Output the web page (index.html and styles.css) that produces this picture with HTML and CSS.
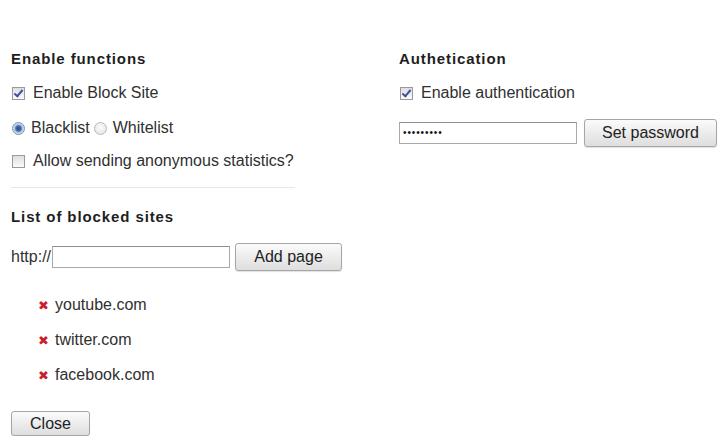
FILE: index.html
```html
<!DOCTYPE html>
<html>
<head>
<meta charset="utf-8">
<link rel="stylesheet" href="styles.css">
</head>
<body>
<div class="page">
  <div class="col left">
    <h2 class="heading">Enable functions</h2>
    <div class="row r1"><span class="cb checked"></span><span>Enable Block Site</span></div>
    <div class="row r2"><span class="radio on"></span><span>Blacklist</span><span class="radio gap"></span><span>Whitelist</span></div>
    <div class="row r3"><span class="cb"></span><span>Allow sending anonymous statistics?</span></div>
    <div class="sep"></div>
    <h2 class="heading h2b">List of blocked sites</h2>
    <div class="addrow"><span>http://</span><span class="field url"></span><span class="btn add">Add page</span></div>
    <ul class="sites">
      <li><span class="x">✖</span>youtube.com</li>
      <li><span class="x">✖</span>twitter.com</li>
      <li><span class="x">✖</span>facebook.com</li>
    </ul>
    <span class="btn close">Close</span>
  </div>
  <div class="col right">
    <h2 class="heading">Authetication</h2>
    <div class="row r1"><span class="cb checked"></span><span>Enable authentication</span></div>
    <div class="pwrow"><span class="field pw">•••••••••</span><span class="btn setpw">Set password</span></div>
  </div>
</div>
</body>
</html>
```
FILE: styles.css
```css
html, body { margin: 0; padding: 0; background: #fff; }
body { font-family: "Liberation Sans", Arial, sans-serif; color: #303030; font-size: 16px; }
.page { display: grid; grid-template-columns: 388px 1fr; padding: 48px 0 0 11px; }
.col { display: flex; flex-direction: column; align-items: flex-start; }
.heading { margin: 0; font-size: 15px; font-weight: bold; color: #1e1e1e; line-height: 22px; height: 22px; letter-spacing: 0.9px; white-space: nowrap; }
.row { display: flex; align-items: center; height: 22px; white-space: nowrap; }
.r1 { margin-top: 12px; }
.r2 { margin-top: 13px; }
.r3 { margin-top: 11px; }
.cb { width: 11px; height: 11px; border: 1px solid #9a9a9a; background: linear-gradient(#dedede, #fbfbfb); margin: 0 8px 0 1px; position: relative; box-sizing: content-box; }
.cb.checked::after { content: ""; position: absolute; left: 3px; top: 0px; width: 3px; height: 7px; border: solid #3d52a0; border-width: 0 2px 2px 0; transform: rotate(40deg); }
.radio { width: 11px; height: 11px; border: 1px solid #9a9a9a; border-radius: 50%; background: radial-gradient(circle at 50% 40%, #fff, #dcdcdc); margin: 0 6px 0 1px; position: relative; }
.radio.gap { margin-left: 4px; border-color: #b8b8b8; background: radial-gradient(circle at 50% 40%, #fbfbfb, #e2e2e2); }
.radio.on { background: radial-gradient(circle at 50% 50%, #2f4f8a 0, #3e6aa8 2.5px, #a9c4e4 4px, #e6eef8 6px); border-color: #7d8fa6; }
.sep { width: 284px; height: 1px; background: #e8e8e8; margin-top: 15px; }
.h2b { margin-top: 18px; }
.addrow { display: flex; align-items: center; height: 28px; margin-top: 15px; }
.field { display: inline-block; box-sizing: border-box; border: 1px solid #a9a9a9; border-top-color: #8f8f8f; background: #fff; height: 22px; }
.url { width: 178px; margin-left: 1px; }
.btn { display: inline-flex; align-items: center; justify-content: center; box-sizing: border-box; border: 1px solid #a6a6a6; border-radius: 3px; background: linear-gradient(#fbfbfb, #ececec 50%, #dedede); color: #222; font-size: 16px; box-shadow: 0 1px 1px rgba(0,0,0,0.12); }
.add { width: 107px; height: 28px; margin-left: 5px; }
.sites { list-style: none; margin: 23px 0 0 0; padding: 0 0 0 27px; display: flex; flex-direction: column; gap: 13px; }
.sites li { height: 22px; display: flex; align-items: center; }
.x { color: #cc1f2e; font-size: 13px; width: 17px; }
.close { width: 79px; height: 25px; margin-top: 25px; }
.pwrow { display: flex; align-items: center; height: 28px; margin-top: 15px; }
.pw { width: 178px; height: 22px; font-size: 10px; line-height: 20px; padding-left: 3px; color: #111; letter-spacing: 0.9px; }
.setpw { width: 133px; height: 28px; margin-left: 7px; }
```
